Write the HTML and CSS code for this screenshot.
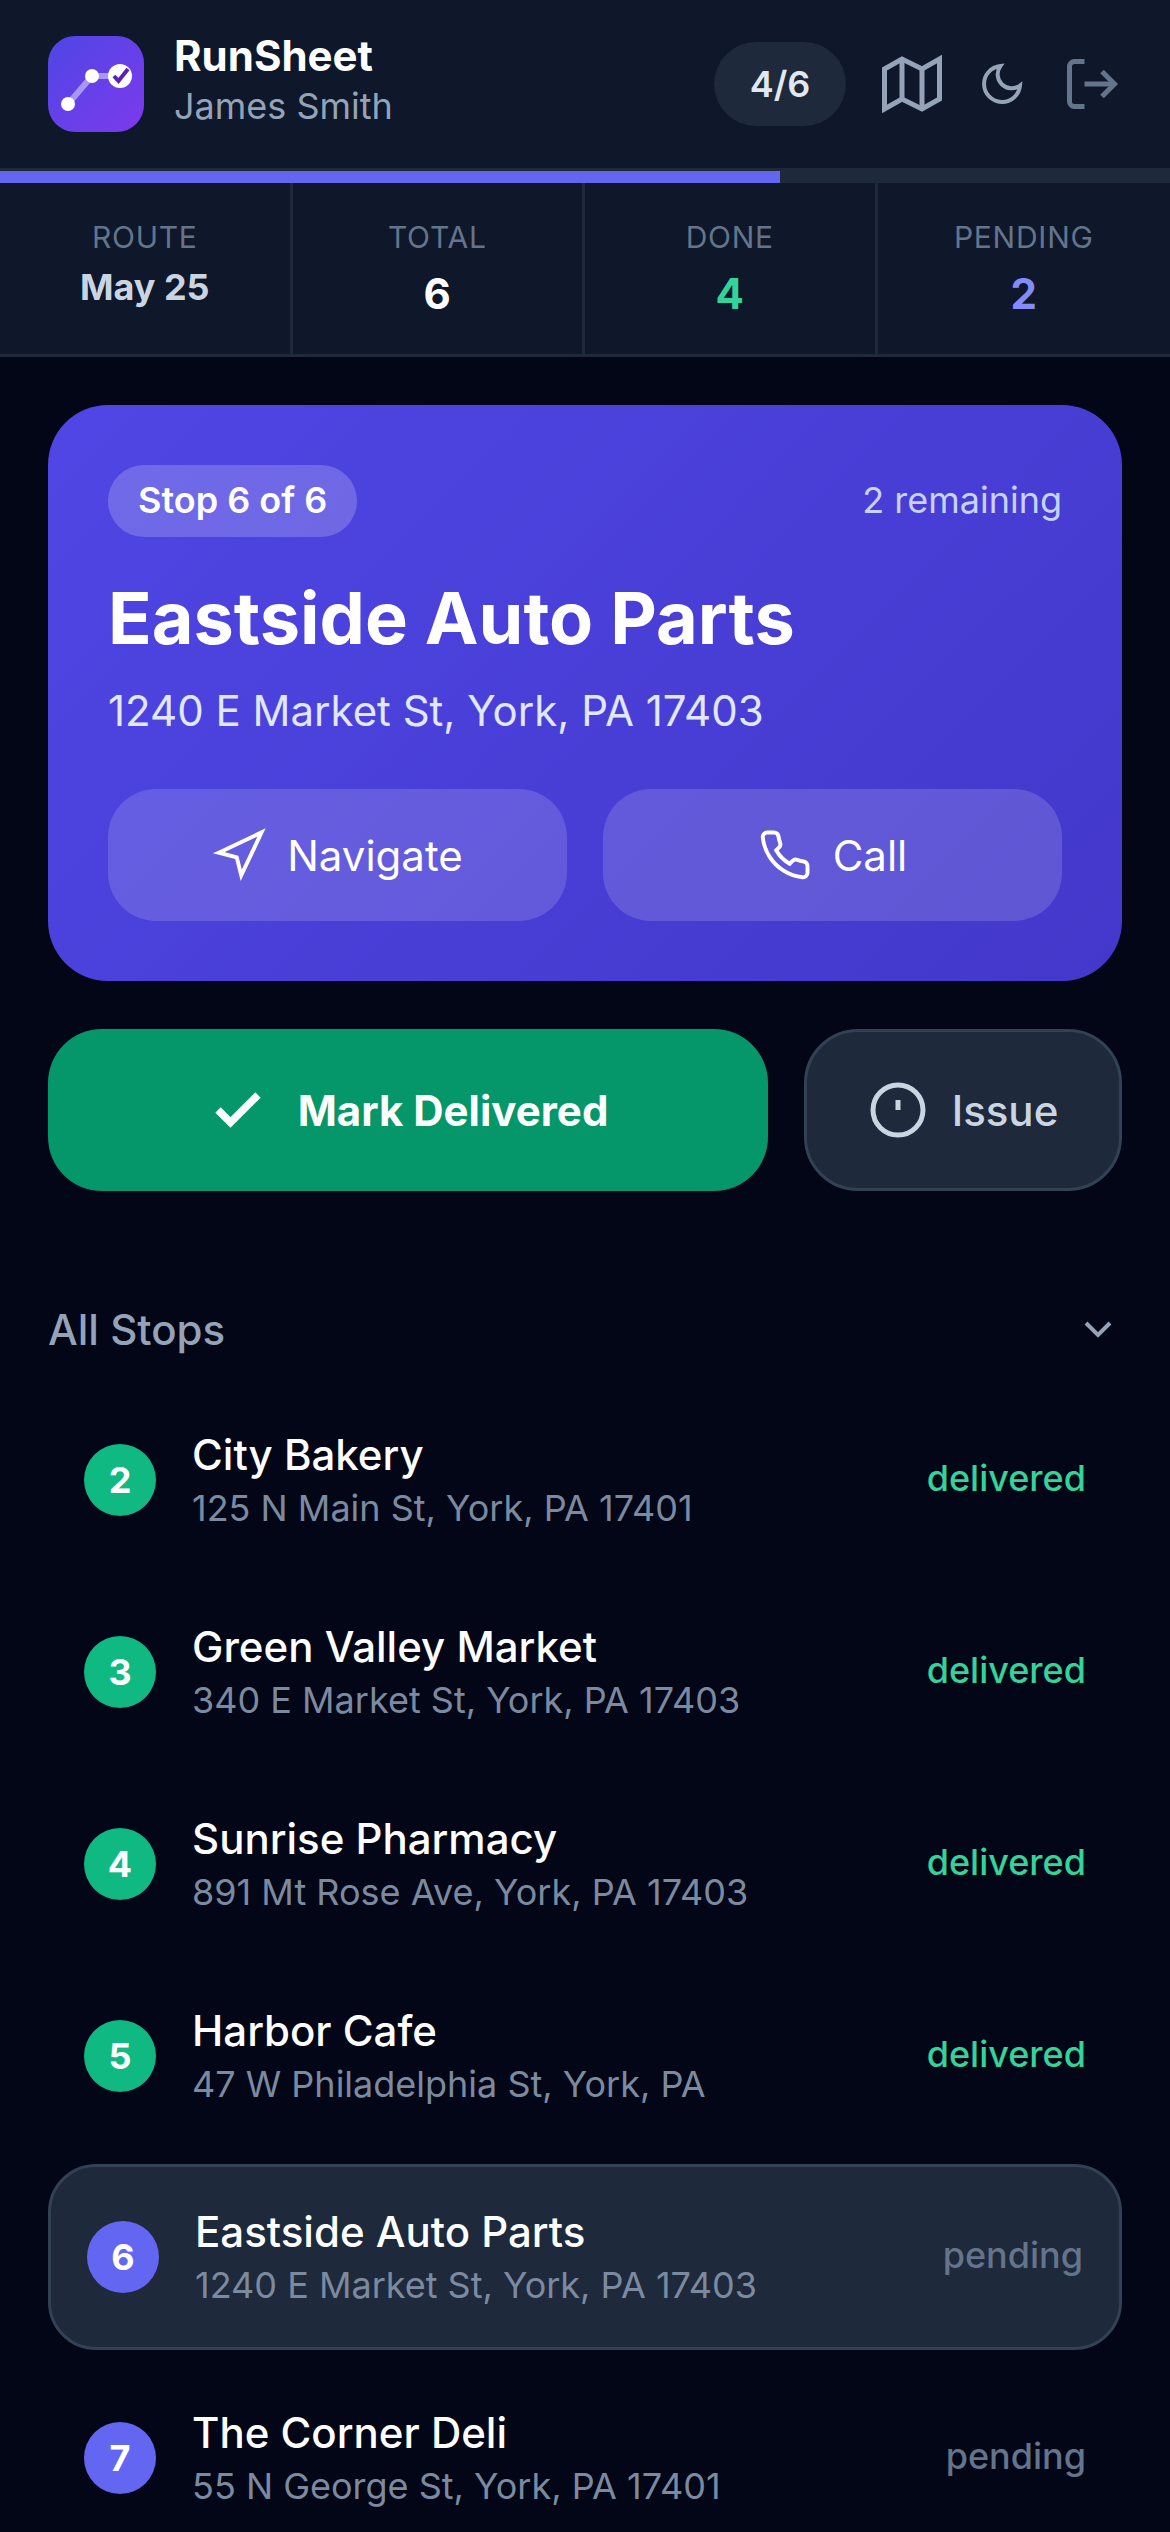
FILE: index.html
```html
<!DOCTYPE html>
<html lang="en">

<head>
    <meta charset="UTF-8">
    <meta name="viewport" content="width=device-width, initial-scale=1.0">
    <title>RunSheet</title>
    <link rel="stylesheet" href="styles.css">
</head>

<body>

    <div class="screen">

        <header class="topbar">
            <svg class="logo" viewBox="0 0 96 96">
                <defs>
                    <linearGradient id="logoFill" x1="0" y1="0" x2="1" y2="1">
                        <stop offset="0" stop-color="#4f46e5" />
                        <stop offset="1" stop-color="#7c3aed" />
                    </linearGradient>
                </defs>
                <rect width="96" height="96" rx="27" fill="url(#logoFill)" />
                <polyline points="20,68 44,40 72,40" fill="none" stroke="#fff" stroke-opacity="0.45" stroke-width="6" />
                <circle cx="20" cy="68" r="7" fill="#fff" />
                <circle cx="44" cy="40" r="7" fill="#fff" />
                <circle cx="72" cy="40" r="12" fill="#fff" />
                <polyline points="66,40 70.5,45 80,33" fill="none" stroke="#5b21b6" stroke-width="4" />
            </svg>
            <div class="brand">
                <div class="brand-name">RunSheet</div>
                <div class="brand-user">James Smith</div>
            </div>
            <div class="top-actions">
                <span class="count-pill">4/6</span>
                <svg class="icon-map" viewBox="0 0 24 24">
                    <polygon points="1 6 1 22 8 18 16 22 23 18 23 2 16 6 8 2 1 6" />
                    <line x1="8" y1="2" x2="8" y2="18" />
                    <line x1="16" y1="6" x2="16" y2="22" />
                </svg>
                <svg class="icon-moon" viewBox="0 0 24 24">
                    <path d="M21 12.79A9 9 0 1 1 11.21 3 7 7 0 0 0 21 12.79z" />
                </svg>
                <svg class="icon-logout" viewBox="0 0 24 24">
                    <path d="M9 21H5a2 2 0 0 1-2-2V5a2 2 0 0 1 2-2h4" />
                    <polyline points="16 17 21 12 16 7" />
                    <line x1="21" y1="12" x2="9" y2="12" />
                </svg>
            </div>
        </header>

        <div class="progress">
            <div class="progress-fill" style="width: 66.67%"></div>
        </div>

        <div class="stats">
            <div class="stat">
                <div class="stat-label">ROUTE</div>
                <div class="stat-date">May 25</div>
            </div>
            <div class="stat">
                <div class="stat-label">TOTAL</div>
                <div class="stat-value">6</div>
            </div>
            <div class="stat">
                <div class="stat-label">DONE</div>
                <div class="stat-value green">4</div>
            </div>
            <div class="stat">
                <div class="stat-label">PENDING</div>
                <div class="stat-value indigo">2</div>
            </div>
        </div>

        <main class="content">

            <section class="hero">
                <div class="hero-top">
                    <span class="hero-badge">Stop 6 of 6</span>
                    <span class="hero-left">2 remaining</span>
                </div>
                <h1>Eastside Auto Parts</h1>
                <p class="hero-address">1240 E Market St, York, PA 17403</p>
                <div class="hero-buttons">
                    <button class="hero-btn">
                        <svg viewBox="0 0 24 24">
                            <polygon points="3 11 22 2 13 21 11 13 3 11" />
                        </svg>
                        Navigate
                    </button>
                    <button class="hero-btn">
                        <svg viewBox="0 0 24 24">
                            <path d="M22 16.92v3a2 2 0 0 1-2.18 2 19.79 19.79 0 0 1-8.63-3.07 19.5 19.5 0 0 1-6-6 19.79 19.79 0 0 1-3.07-8.67A2 2 0 0 1 4.11 2h3a2 2 0 0 1 2 1.72 12.84 12.84 0 0 0 .7 2.81 2 2 0 0 1-.45 2.11L8.09 9.91a16 16 0 0 0 6 6l1.27-1.27a2 2 0 0 1 2.11-.45 12.84 12.84 0 0 0 2.81.7A2 2 0 0 1 22 16.92z" />
                        </svg>
                        Call
                    </button>
                </div>
            </section>

            <div class="actions">
                <button class="btn-done">
                    <svg viewBox="0 0 24 24">
                        <polyline points="20 6 9 17 4 12" />
                    </svg>
                    Mark Delivered
                </button>
                <button class="btn-issue">
                    <svg viewBox="0 0 24 24">
                        <circle cx="12" cy="12" r="10" />
                        <line x1="12" y1="8" x2="12" y2="12" />
                    </svg>
                    Issue
                </button>
            </div>

            <div class="list-head">
                <span>All Stops</span>
                <svg viewBox="0 0 24 24">
                    <polyline points="6 9 12 15 18 9" />
                </svg>
            </div>

            <div class="stops">
                <div class="stop">
                    <span class="stop-num done">2</span>
                    <div class="stop-text">
                        <div class="stop-name">City Bakery</div>
                        <div class="stop-address">125 N Main St, York, PA 17401</div>
                    </div>
                    <span class="stop-status delivered">delivered</span>
                </div>
                <div class="stop">
                    <span class="stop-num done">3</span>
                    <div class="stop-text">
                        <div class="stop-name">Green Valley Market</div>
                        <div class="stop-address">340 E Market St, York, PA 17403</div>
                    </div>
                    <span class="stop-status delivered">delivered</span>
                </div>
                <div class="stop">
                    <span class="stop-num done">4</span>
                    <div class="stop-text">
                        <div class="stop-name">Sunrise Pharmacy</div>
                        <div class="stop-address">891 Mt Rose Ave, York, PA 17403</div>
                    </div>
                    <span class="stop-status delivered">delivered</span>
                </div>
                <div class="stop">
                    <span class="stop-num done">5</span>
                    <div class="stop-text">
                        <div class="stop-name">Harbor Cafe</div>
                        <div class="stop-address">47 W Philadelphia St, York, PA</div>
                    </div>
                    <span class="stop-status delivered">delivered</span>
                </div>
                <div class="stop current">
                    <span class="stop-num">6</span>
                    <div class="stop-text">
                        <div class="stop-name">Eastside Auto Parts</div>
                        <div class="stop-address">1240 E Market St, York, PA 17403</div>
                    </div>
                    <span class="stop-status">pending</span>
                </div>
                <div class="stop">
                    <span class="stop-num">7</span>
                    <div class="stop-text">
                        <div class="stop-name">The Corner Deli</div>
                        <div class="stop-address">55 N George St, York, PA 17401</div>
                    </div>
                    <span class="stop-status">pending</span>
                </div>
            </div>

        </main>

    </div>

</body>

</html>
```

FILE: styles.css
```css
html,
body {
    margin: 0;
    padding: 0;
    height: 100%;
    overflow: hidden;
    background: #020617;
    font-family: Inter, "Noto Sans", sans-serif;
}

.screen {
    width: 1170px;
    height: 2532px;
    overflow: hidden;
    color: #fff;
}

svg {
    display: block;
    flex-shrink: 0;
    fill: none;
    stroke: currentColor;
}

/* top bar */
.topbar {
    display: flex;
    align-items: center;
    gap: 30px;
    height: 168px;
    padding: 0 48px;
    box-sizing: border-box;
    background: #0f172a;
}

.logo {
    width: 96px;
    height: 96px;
    stroke: none;
}

.brand {
    flex: 1;
    padding-bottom: 10px;
}

.brand-name {
    font-size: 42px;
    line-height: 54px;
    font-weight: 700;
}

.brand-user {
    font-size: 36px;
    line-height: 46px;
    color: #94a3b8;
}

.top-actions {
    display: flex;
    align-items: center;
    gap: 36px;
}

.count-pill {
    display: flex;
    align-items: center;
    justify-content: center;
    width: 132px;
    height: 84px;
    border-radius: 42px;
    background: #1e293b;
    font-size: 36px;
    font-weight: 600;
    color: #e2e8f0;
}

.icon-map {
    width: 60px;
    height: 60px;
    stroke-width: 2;
    color: #94a3b8;
}

.icon-moon {
    width: 48px;
    height: 48px;
    stroke-width: 2;
    color: #94a3b8;
}

.icon-logout {
    width: 60px;
    height: 60px;
    stroke-width: 2;
    color: #64748b;
}

.progress {
    height: 15px;
    background: #1e293b;
    display: flex;
    align-items: flex-end;
}

.progress-fill {
    height: 12px;
    background: #6366f1;
}

/* stats */
.stats {
    display: grid;
    grid-template-columns: repeat(4, 1fr);
    height: 174px;
    box-sizing: border-box;
    background: #0f172a;
    border-bottom: 3px solid #1e293b;
}

.stat {
    padding-top: 33px;
    text-align: center;
    border-right: 3px solid #1e293b;
}

.stat:last-child {
    border-right: none;
}

.stat-label {
    font-size: 30px;
    line-height: 42px;
    letter-spacing: 0.75px;
    color: #64748b;
}

.stat-date {
    margin-top: 5px;
    font-size: 36px;
    line-height: 48px;
    font-weight: 700;
    color: #cbd5e1;
}

.stat-value {
    margin-top: 9px;
    font-size: 42px;
    line-height: 54px;
    font-weight: 700;
}

.green {
    color: #34d399;
}

.indigo {
    color: #818cf8;
}

/* main area */
.content {
    padding: 48px;
}

.hero {
    height: 576px;
    box-sizing: border-box;
    padding: 60px;
    border-radius: 60px;
    background: linear-gradient(135deg, #4f46e5, #4338ca);
}

.hero-top {
    display: flex;
    align-items: center;
    justify-content: space-between;
}

.hero-badge {
    padding: 0 30px;
    height: 72px;
    line-height: 70px;
    border-radius: 36px;
    background: rgba(255, 255, 255, 0.2);
    font-size: 36px;
    font-weight: 600;
}

.hero-left {
    padding-bottom: 3px;
    font-size: 36px;
    color: #c7d2fe;
}

.hero h1 {
    margin: 36px 0 0;
    font-size: 72px;
    line-height: 90px;
    font-weight: 700;
}

.hero-address {
    margin: 18px 0 0;
    font-size: 42px;
    line-height: 60px;
    color: #e0e7ff;
}

.hero-buttons {
    display: grid;
    grid-template-columns: 1fr 1fr;
    gap: 36px;
    margin-top: 48px;
}

.hero-btn {
    display: flex;
    align-items: center;
    justify-content: center;
    gap: 21px;
    height: 132px;
    border: none;
    border-radius: 48px;
    background: rgba(255, 255, 255, 0.15);
    color: #fff;
    font-family: inherit;
    font-size: 42px;
    font-weight: 400;
}

.hero-btn svg {
    width: 54px;
    height: 54px;
    stroke-width: 1.75;
}

.actions {
    display: flex;
    gap: 36px;
    margin-top: 48px;
}

.actions button {
    display: flex;
    align-items: center;
    justify-content: center;
    height: 162px;
    font-family: inherit;
    font-size: 42px;
    border-radius: 54px;
}

.actions svg {
    width: 60px;
    height: 60px;
}

.btn-done {
    flex: 1;
    gap: 30px;
    border: none;
    background: #059669;
    color: #fff;
    font-weight: 700;
}

.btn-done svg {
    stroke-width: 3;
}

.btn-issue {
    width: 318px;
    gap: 24px;
    border: 3px solid #334155;
    background: #1e293b;
    color: #cbd5e1;
    font-weight: 500;
}

.btn-issue svg {
    stroke-width: 2;
}

.list-head {
    display: flex;
    align-items: center;
    justify-content: space-between;
    margin-top: 108px;
    height: 60px;
    font-size: 42px;
    font-weight: 500;
    color: #94a3b8;
}

.list-head svg {
    width: 48px;
    height: 48px;
    stroke-width: 2;
}

/* stop list */
.stops {
    display: flex;
    flex-direction: column;
    gap: 18px;
    margin-top: 34px;
}

.stop {
    display: flex;
    align-items: center;
    gap: 36px;
    height: 174px;
    flex-shrink: 0;
    padding: 0 36px;
    box-sizing: border-box;
    border-radius: 48px;
}

.stop.current {
    height: 186px;
    margin: 3px 0;
    border: 3px solid #334155;
    background: #1e293b;
}

.stop-num {
    display: flex;
    align-items: center;
    justify-content: center;
    width: 72px;
    height: 72px;
    border-radius: 50%;
    background: #6366f1;
    font-size: 36px;
    font-weight: 700;
}

.stop-num.done {
    background: #10b981;
}

.stop-text {
    flex: 1;
    padding-top: 1px;
}

.stop-name {
    font-size: 42px;
    line-height: 54px;
    font-weight: 500;
}

.stop-address {
    margin-top: 1px;
    font-size: 36px;
    line-height: 51px;
    color: #7c8aa0;
}

.stop-status {
    padding-bottom: 4px;
    font-size: 36px;
    font-weight: 500;
    color: #64748b;
}

.stop-status.delivered {
    color: #34d399;
}
```
